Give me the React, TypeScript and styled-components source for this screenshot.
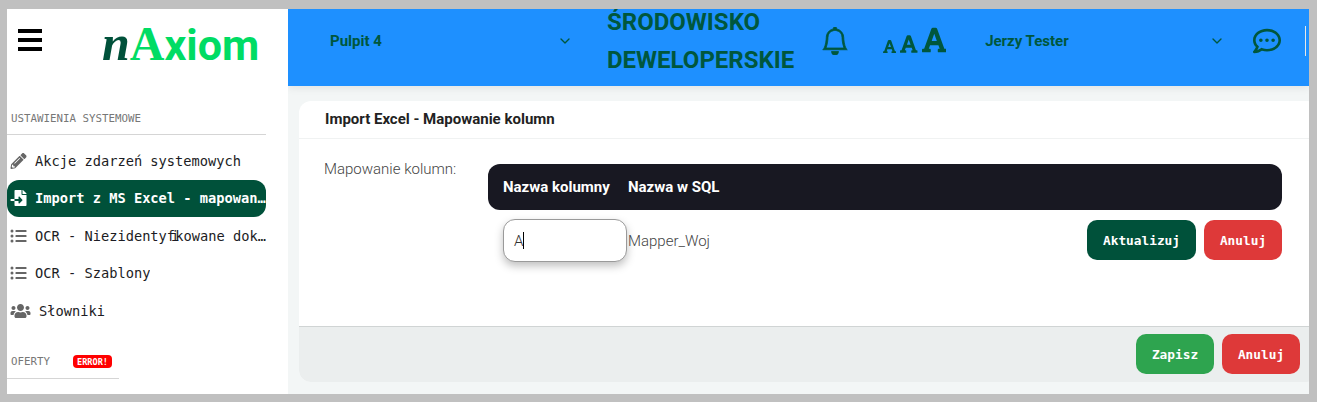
import * as React from 'react';
import styled, { createGlobalStyle } from 'styled-components';
import { ChevronDown } from 'lucide-react';
import { FaPencilAlt, FaFileImport, FaListUl, FaUsers, FaFont, FaRegCommentDots } from 'react-icons/fa';
import { BsBell } from 'react-icons/bs';

const mono = '"DejaVu Sans Mono", "Liberation Mono", monospace';

const GlobalStyle = createGlobalStyle`
  html, body {
    margin: 0;
    padding: 0;
    height: 402px;
    overflow: hidden;
    background: #c0c0c0;
  }
  * {
    box-sizing: border-box;
  }
`;

const Frame = styled.div`
  width: 1317px;
  height: 402px;
  padding: 9px 8px 8px 7px;
  display: flex;
  font-family: Roboto, sans-serif;
`;

const Sidebar = styled.aside`
  width: 281px;
  flex-shrink: 0;
  background: #fff;
  overflow: hidden;
`;

const LogoRow = styled.div`
  height: 77px;
  margin-bottom: 20px;
  display: flex;
  align-items: flex-start;
  padding-left: 11px;
`;

const Hamburger = styled.div`
  width: 24px;
  height: 22px;
  margin-top: 20px;
  display: flex;
  flex-direction: column;
  justify-content: space-between;
  span {
    display: block;
    height: 4px;
    background: #000;
  }
`;

const Logo = styled.div`
  margin-left: 60px;
  margin-top: 10px;
  display: flex;
  align-items: baseline;
  line-height: 48px;
  color: #00dc64;
  font-weight: 700;
  font-size: 43px;
  i {
    font-family: 'Liberation Serif', serif;
    font-size: 50px;
    color: #00513a;
  }
  b {
    font-family: 'Liberation Serif', serif;
    font-size: 48px;
    font-weight: 700;
  }
`;

const SectionLabel = styled.div<{ $width: number }>`
  width: ${(p) => p.$width}px;
  height: 29px;
  padding: 0 0 4px 4px;
  display: flex;
  align-items: center;
  font-family: ${mono};
  font-size: 10.8px;
  color: #777;
  border-bottom: 1px solid #d5d5d5;
`;

const Menu = styled.nav`
  width: 259px;
  padding-top: 7px;
  margin-bottom: 20px;
  display: flex;
  flex-direction: column;
`;

const MenuItem = styled.div<{ $active?: boolean; $iconWidth?: number }>`
  height: 37.5px;
  padding-left: 3px;
  display: flex;
  align-items: center;
  gap: 8px;
  border-radius: 12px;
  font-family: ${mono};
  font-size: 13.7px;
  font-weight: ${(p) => (p.$active ? 700 : 400)};
  color: ${(p) => (p.$active ? '#fff' : '#1c1c24')};
  background: ${(p) => (p.$active ? '#00513a' : 'transparent')};
  svg {
    flex-shrink: 0;
    width: ${(p) => p.$iconWidth ?? 17}px;
    height: 16px;
    color: ${(p) => (p.$active ? '#fff' : '#666')};
  }
  span {
    overflow: hidden;
    white-space: nowrap;
    text-overflow: ellipsis;
  }
`;

// the reference font joins "fi" into one cell
const Ligature = styled.b`
  font-weight: inherit;
  letter-spacing: -4px;
`;

const ErrorBadge = styled.span`
  margin-left: 23px;
  width: 39px;
  height: 13px;
  display: inline-flex;
  align-items: center;
  justify-content: center;
  border-radius: 4px;
  background: #ff0000;
  color: #fff;
  font-size: 8.6px;
  font-weight: 700;
`;

const Main = styled.main`
  flex: 1;
  min-width: 0;
  display: flex;
  flex-direction: column;
  background: #f3f6f6;
  overflow: hidden;
`;

const Header = styled.header`
  height: 77px;
  flex-shrink: 0;
  padding-bottom: 13px;
  display: flex;
  align-items: center;
  background: #1e90ff;
  box-shadow: 0 2px 8px rgba(0, 0, 0, 0.08);
  color: #00573d;
  font-weight: 700;
  font-size: 15px;
`;

const Selector = styled.div<{ $left: number; $width: number }>`
  margin-left: ${(p) => p.$left}px;
  width: ${(p) => p.$width}px;
  flex-shrink: 0;
  display: flex;
  align-items: center;
  justify-content: space-between;
  svg {
    width: 16px;
    height: 16px;
    stroke-width: 2;
  }
`;

const EnvTitle = styled.div`
  margin-left: 34px;
  width: 200px;
  flex-shrink: 0;
  font-size: 24px;
  line-height: 38px;
  text-transform: uppercase;
`;

const HeaderIcon = styled.div<{ $left: number; $size: number; $stroke?: number }>`
  margin-left: ${(p) => p.$left}px;
  flex-shrink: 0;
  display: flex;
  svg {
    width: ${(p) => p.$size}px;
    height: ${(p) => p.$size}px;
    stroke: currentColor;
    stroke-width: ${(p) => p.$stroke ?? 0};
  }
`;

const FontSizes = styled.div`
  margin-left: 34px;
  height: 26px;
  display: flex;
  align-items: flex-end;
  gap: 4px;
  flex-shrink: 0;
`;

const FontGlyph = styled(FaFont)<{ $size: number }>`
  width: ${(p) => p.$size * 0.875}px;
  height: ${(p) => p.$size}px;
`;

const Divider = styled.div`
  margin-left: 24px;
  width: 1px;
  height: 30px;
  flex-shrink: 0;
  background: #e8e8e8;
`;

const Content = styled.div`
  flex: 1;
  min-height: 0;
  padding: 15px 0 12px 11px;
`;

const Card = styled.section`
  height: 100%;
  width: 1020px;
  display: flex;
  flex-direction: column;
  background: #fff;
  border-radius: 12px;
`;

const CardTitle = styled.h1`
  height: 38px;
  margin: 0;
  padding: 0 0 2px 26px;
  display: flex;
  align-items: center;
  font-size: 15px;
  font-weight: 700;
  color: #222;
  border-bottom: 1px solid #f0f2f2;
`;

const CardBody = styled.div`
  flex: 1;
  padding: 22px 27px 0 25px;
  display: flex;
`;

const FieldLabel = styled.div`
  width: 164px;
  flex-shrink: 0;
  font-size: 15px;
  font-weight: 300;
  line-height: 16px;
  color: #444;
`;

const MappingTable = styled.div`
  width: 794px;
  margin-top: 3px;
  display: flex;
  flex-direction: column;
`;

const TableHead = styled.div`
  height: 46px;
  padding-left: 15px;
  display: flex;
  align-items: center;
  background: #181822;
  border-radius: 12px;
  color: #fff;
  font-size: 15px;
  font-weight: 700;
`;

const HeadCell = styled.div<{ $width: number }>`
  width: ${(p) => p.$width}px;
`;

const TableRow = styled.div`
  margin-top: 9px;
  padding-left: 15px;
  display: flex;
  align-items: center;
`;

const InputBox = styled.div`
  width: 124px;
  height: 43px;
  padding-left: 10px;
  display: flex;
  align-items: center;
  background: #fff;
  border: 1px solid #9a9a9a;
  border-radius: 12px;
  box-shadow: 0 4px 8px rgba(0, 0, 0, 0.25);
  font-size: 15px;
  font-weight: 300;
  color: #333;
`;

const Caret = styled.span`
  width: 1px;
  height: 17px;
  background: #000;
`;

const SqlName = styled.div`
  margin-left: 1px;
  font-size: 15px;
  font-weight: 300;
  color: #444;
`;

const RowActions = styled.div`
  margin-left: auto;
  margin-bottom: 1px;
  display: flex;
  gap: 8px;
`;

const Button = styled.button<{ $bg: string; $width: number }>`
  width: ${(p) => p.$width}px;
  height: 40px;
  padding: 0;
  border: none;
  border-radius: 10px;
  background: ${(p) => p.$bg};
  color: #fff;
  font-family: ${mono};
  font-size: 12.8px;
  font-weight: 700;
`;

const CardFooter = styled.footer`
  height: 56px;
  padding: 7px 19px 0 0;
  display: flex;
  justify-content: flex-end;
  gap: 8px;
  background: #ebeeee;
  border-top: 1px solid #d0d4d4;
  border-radius: 0 0 12px 12px;
`;

const App: React.FC = () => {
  return (
    <>
      <GlobalStyle />
      <Frame>
        <Sidebar>
          <LogoRow>
            <Hamburger>
              <span />
              <span />
              <span />
            </Hamburger>
            <Logo>
              <i>n</i>
              <b>A</b>xiom
            </Logo>
          </LogoRow>
          <SectionLabel $width={259}>USTAWIENIA SYSTEMOWE</SectionLabel>
          <Menu>
            <MenuItem>
              <FaPencilAlt />
              <span>Akcje zdarzeń systemowych</span>
            </MenuItem>
            <MenuItem $active>
              <FaFileImport />
              <span>Import z MS Excel - mapowanie kolumn</span>
            </MenuItem>
            <MenuItem>
              <FaListUl />
              <span>
                OCR - Niezidenty<Ligature>fi</Ligature>kowane dokumenty
              </span>
            </MenuItem>
            <MenuItem>
              <FaListUl />
              <span>OCR - Szablony</span>
            </MenuItem>
            <MenuItem $iconWidth={21}>
              <FaUsers />
              <span>Słowniki</span>
            </MenuItem>
          </Menu>
          <SectionLabel $width={112}>
            OFERTY
            <ErrorBadge>ERROR!</ErrorBadge>
          </SectionLabel>
        </Sidebar>
        <Main>
          <Header>
            <Selector $left={42} $width={243}>
              Pulpit 4
              <ChevronDown />
            </Selector>
            <EnvTitle>Środowisko Deweloperskie</EnvTitle>
            <HeaderIcon $left={14} $size={28} $stroke={0.45}>
              <BsBell />
            </HeaderIcon>
            <FontSizes>
              <FontGlyph $size={15} />
              <FontGlyph $size={20} />
              <FontGlyph $size={28} />
            </FontSizes>
            <Selector $left={39} $width={240}>
              Jerzy Tester
              <ChevronDown />
            </Selector>
            <HeaderIcon $left={28} $size={28}>
              <FaRegCommentDots />
            </HeaderIcon>
            <Divider />
          </Header>
          <Content>
            <Card>
              <CardTitle>Import Excel - Mapowanie kolumn</CardTitle>
              <CardBody>
                <FieldLabel>Mapowanie kolumn:</FieldLabel>
                <MappingTable>
                  <TableHead>
                    <HeadCell $width={125}>Nazwa kolumny</HeadCell>
                    <HeadCell $width={120}>Nazwa w SQL</HeadCell>
                  </TableHead>
                  <TableRow>
                    <InputBox>
                      A<Caret />
                    </InputBox>
                    <SqlName>Mapper_Woj</SqlName>
                    <RowActions>
                      <Button $bg="#00513a" $width={109}>Aktualizuj</Button>
                      <Button $bg="#de3939" $width={78}>Anuluj</Button>
                    </RowActions>
                  </TableRow>
                </MappingTable>
              </CardBody>
              <CardFooter>
                <Button $bg="#2ea44f" $width={78}>Zapisz</Button>
                <Button $bg="#de3939" $width={78}>Anuluj</Button>
              </CardFooter>
            </Card>
          </Content>
        </Main>
      </Frame>
    </>
  );
};

export default App;
